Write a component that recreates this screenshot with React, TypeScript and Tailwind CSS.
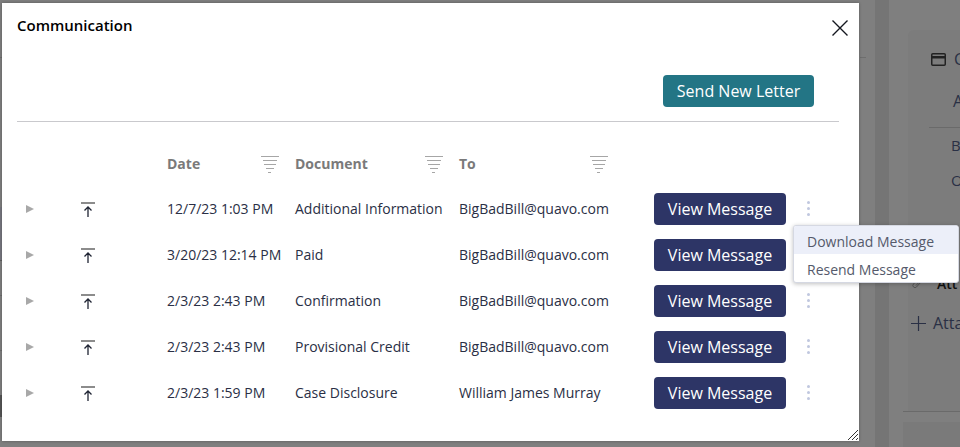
import { Fragment } from 'react';

const rows = [
  { date: '12/7/23 1:03 PM', doc: 'Additional Information', to: 'BigBadBill@quavo.com' },
  { date: '3/20/23 12:14 PM', doc: 'Paid', to: 'BigBadBill@quavo.com' },
  { date: '2/3/23 2:43 PM', doc: 'Confirmation', to: 'BigBadBill@quavo.com' },
  { date: '2/3/23 2:43 PM', doc: 'Provisional Credit', to: 'BigBadBill@quavo.com' },
  { date: '2/3/23 1:59 PM', doc: 'Case Disclosure', to: 'William James Murray' },
];

const FilterIcon = () => (
  <svg width="18" height="17" viewBox="0 0 18 17" className="shrink-0 mt-[2px]">
    <g fill="#a6a6a6">
      <rect x="0" y="0" width="18" height="1" />
      <rect x="2" y="4" width="14" height="1" />
      <rect x="3" y="8" width="12" height="1" />
      <rect x="5" y="12" width="8" height="1" />
      <rect x="7" y="16" width="3" height="1" />
    </g>
  </svg>
);

const UploadIcon = () => (
  <svg width="14" height="15" viewBox="0 0 14 15" className="block">
    <rect x="0" y="0" width="14" height="2" fill="#8c8c8c" />
    <path d="M7 15V5M3.5 8.5L7 5l3.5 3.5" fill="none" stroke="#1f2433" strokeWidth="1.3" />
  </svg>
);

const Dots = () => (
  <div className="flex flex-col gap-[3px] items-center w-[4px] mb-[2px] -ml-[1px]">
    <span className="w-[3px] h-[3px] rounded-full bg-[#c0c7df]" />
    <span className="w-[3px] h-[3px] rounded-full bg-[#c0c7df]" />
    <span className="w-[3px] h-[3px] rounded-full bg-[#c0c7df]" />
  </div>
);

export default function App() {
  return (
    <div className="relative w-[960px] h-[447px] overflow-hidden bg-[#7f7f7f] font-['Open_Sans','Noto_Sans',sans-serif] text-[14px] text-[#2a2f45]">
      {/* page behind the overlay */}
      <div className="absolute left-0 top-[57px] w-[2px] flex flex-col">
        <div className="h-px bg-[#6e6e6e]" />
        <div className="h-[149px]" />
        <div className="h-[53px] bg-[#77777f]" />
        <div className="h-px bg-[#5f5f5f]" />
        <div className="h-[34px]" />
        <div className="h-px bg-[#6e6e6e]" />
        <div className="h-[54px]" />
        <div className="h-px bg-[#6e6e6e]" />
        <div className="h-[44px]" />
        <div className="h-[22px] bg-[#555555]" />
      </div>
      <div className="absolute left-[860px] top-[57px] w-[6px] h-px bg-[#6e6e6e]" />
      <div className="absolute left-[875px] right-0 top-0 bottom-0 flex">
        <div className="w-[14px] shrink-0 bg-[#757575]" />
        <div className="flex-1 min-w-0 flex flex-col pl-[14px]">
          <div className="h-[30px]" />
          <div className="h-[381px] ml-[5px] bg-[#7c7c7c] rounded-tl-[6px] pl-[23px] pt-[18px] text-[#2a3045] whitespace-nowrap overflow-hidden">
            <div className="flex items-center gap-[8px] h-[22px]">
              <svg width="15" height="13" viewBox="0 0 15 13" className="shrink-0">
                <rect x="0.75" y="0.75" width="13.5" height="11.5" rx="1" fill="none" stroke="#222" strokeWidth="1.5" />
                <rect x="1" y="3" width="13" height="2.5" fill="#222" />
              </svg>
              <span className="text-[16px]">C</span>
            </div>
            <div className="pl-[22px] mt-[21px] h-[20px] leading-[20px] text-[16px]">A</div>
            <div className="h-px bg-[#6a6a6a] mt-[16px] -ml-[2px]" />
            <div className="pl-[20px] mt-[7px] h-[20px] leading-[20px] text-[15px]">B</div>
            <div className="pl-[20px] mt-[15px] h-[20px] leading-[20px] text-[15px]">O</div>
            <div className="flex items-center mt-[83px] -ml-[20px] h-[20px] gap-[14px]">
              <svg width="12" height="14" viewBox="0 0 12 14" className="shrink-0">
                <path d="M10 6L5.5 11a2 2 0 01-3-3l5-5.500a1.300 1.300 0 012 2L5 9.500" fill="none" stroke="#555" strokeWidth="1" />
              </svg>
              <span className="font-semibold text-[#111]">Att</span>
            </div>
            <div className="flex items-center mt-[20px] -ml-[20px] h-[20px] gap-[7px]">
              <svg width="15" height="15" viewBox="0 0 15 15" className="shrink-0">
                <path d="M7.500 0v15M0 7.500h15" stroke="#2a3045" strokeWidth="1.200" />
              </svg>
              <span className="text-[16px]">Atta</span>
            </div>
          </div>
          <div className="h-px bg-[#6a6a6a]" />
          <div className="h-[10px]" />
          <div className="flex-1 bg-[#7a7a7a]" />
        </div>
      </div>

      <div className="absolute left-[2px] top-[3px] w-[857px] h-[438px] bg-white shadow-[0_0_3px_rgba(0,0,0,0.3)] pt-[13px] px-[15px]">
        <div className="flex justify-between items-start h-[59px]">
          <h1 className="text-[15px] font-semibold text-black leading-[18px]">Communication</h1>
          <svg width="16" height="16" viewBox="0 0 16 16" className="mr-[-4px] mt-[4px]">
            <path d="M.5.5l15 15M15.5.5l-15 15" stroke="#14171f" strokeWidth="1.4" fill="none" />
          </svg>
        </div>
        <div className="flex justify-end pr-[30px]">
          <button className="w-[151px] h-[32px] rounded-[4px] bg-[#237585] text-white text-[16px] font-medium">
            Send New Letter
          </button>
        </div>
        <div className="h-px bg-[#c9c9cd] mt-[14px] w-[822px]" />

        <div className="grid grid-cols-[150px_128px_164px_195px_1fr] mt-[20px]">
          <div />
          <div className="flex items-center justify-between h-[44px] pb-[2px] pr-[16px] font-bold text-[#7a7a7a]">
            <span>Date</span>
            <FilterIcon />
          </div>
          <div className="flex items-center justify-between h-[44px] pb-[2px] pr-[16px] font-bold text-[#7a7a7a]">
            <span>Document</span>
            <FilterIcon />
          </div>
          <div className="flex items-center justify-between h-[44px] pb-[2px] pr-[46px] font-bold text-[#7a7a7a]">
            <span>To</span>
            <FilterIcon />
          </div>
          <div />
          {rows.map((r, i) => (
            <Fragment key={i}>
              <div className="flex items-center h-[46px] pl-[9px]">
                <span className="w-0 h-0 border-y-[4px] border-y-transparent border-l-[8px] border-l-[#a8a8a8]" />
                <span className="ml-[47px]"><UploadIcon /></span>
              </div>
              <div className="flex items-center h-[46px] pb-[2px] whitespace-nowrap">{r.date}</div>
              <div className="flex items-center h-[46px] pb-[2px] whitespace-nowrap">{r.doc}</div>
              <div className="flex items-center h-[46px] pb-[2px] whitespace-nowrap">{r.to}</div>
              <div className="flex items-center h-[46px]">
                <button className="w-[132px] h-[32px] rounded-[4px] bg-[#2d3566] text-white text-[16px] font-medium">
                  View Message
                </button>
                <span className="ml-[21px]"><Dots /></span>
              </div>
            </Fragment>
          ))}
        </div>

        <svg width="10" height="10" viewBox="0 0 10 10" className="absolute right-[1px] bottom-[1px]">
          <path d="M0 10L10 0M4 10L10 4M8 10L10 8" stroke="#333" strokeWidth="1" fill="none" />
        </svg>
      </div>

      <div className="absolute left-[793px] top-[225px] w-[166px] rounded-[3px] bg-white border border-[#d5d8e2] shadow-[0_1px_4px_rgba(0,0,0,0.25)] overflow-hidden text-[#555a6b]">
        <div className="h-[28px] flex items-center pl-[13px] pt-[2px] bg-[#eceff9]">Download Message</div>
        <div className="h-[28px] flex items-center pl-[13px] pt-[2px]">Resend Message</div>
      </div>
    </div>
  );
}
